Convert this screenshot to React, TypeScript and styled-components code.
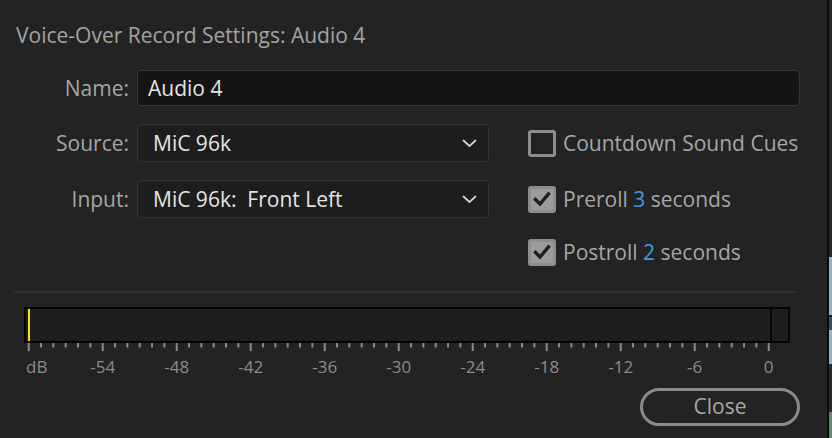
import React from "react";
import styled, { createGlobalStyle } from "styled-components";

const GlobalStyle = createGlobalStyle`
  html, body { margin: 0; padding: 0; background: #232323; }
  body { font-family: "Open Sans", "Noto Sans", sans-serif; }
  * { box-sizing: border-box; }
`;

const Screen = styled.div`
  width: 832px;
  height: 438px;
  display: flex;
  overflow: hidden;
  background: #232323;
`;

const Dialog = styled.div`
  width: 827px;
  height: 438px;
  display: flex;
  flex-direction: column;
  padding: 22px 27px 0 14px;
  background: #232323;
`;

const EdgeLine = styled.div`
  width: 2px;
  background: #0c0c0c;
`;

const Strip = styled.div`
  width: 3px;
  display: flex;
  flex-direction: column;
`;

const StripSeg = styled.div<{ $h: number; $c: string }>`
  height: ${(p) => p.$h}px;
  background: ${(p) => p.$c};
`;

const Title = styled.div`
  font-size: 21px;
  line-height: 26px;
  color: #a3a3a3;
  padding-left: 2px;
  white-space: nowrap;
`;

const Form = styled.div`
  margin-top: 22px;
  display: grid;
  grid-template-columns: 115px 352px 1fr;
  grid-template-rows: 36px 38px 38px 32px;
  column-gap: 8px;
  row-gap: 18px;
  align-items: center;
`;

const Label = styled.label`
  justify-self: end;
  font-size: 21px;
  color: #a6a6a6;
  line-height: 26px;
`;

const TextField = styled.div`
  grid-column: 2 / 4;
  height: 36px;
  background: #141414;
  border: 1px solid #353535;
  border-radius: 4px;
  display: flex;
  align-items: center;
  padding-left: 10px;
  font-size: 21px;
  color: #e4e4e4;
`;

const Select = styled.div`
  height: 38px;
  background: #1d1d1d;
  border: 1px solid #343434;
  border-radius: 4px;
  display: flex;
  align-items: center;
  justify-content: space-between;
  padding: 0 11px 0 15px;
  font-size: 21px;
  color: #e4e4e4;
  white-space: pre;
`;

const CheckRow = styled.div`
  grid-column: 3;
  margin-left: 31px;
  display: flex;
  align-items: center;
  gap: 7px;
  font-size: 21px;
  color: #a6a6a6;
  white-space: nowrap;
`;

const Box = styled.span<{ $checked?: boolean }>`
  width: 28px;
  height: 27px;
  border-radius: 3px;
  border: 3px solid #8d8d8d;
  background: ${(p) => (p.$checked ? "#9c9c9c" : "transparent")};
  display: flex;
  align-items: center;
  justify-content: center;
  flex-shrink: 0;
`;

const Num = styled.span`
  color: #3b9be6;
`;

const Separator = styled.div`
  margin-top: 23px;
  margin-right: 3px;
  height: 2px;
  background: #2e2e2e;
`;

const MeterArea = styled.div`
  margin-top: 14px;
  margin-left: 10px;
  width: 766px;
  display: flex;
  flex-direction: column;
`;

const Meter = styled.div`
  height: 36px;
  border: 2px solid #050505;
  background: #1e1e1e;
  display: flex;
  align-items: stretch;
`;

const Level = styled.div`
  margin-left: 2px;
  width: 2px;
  background: #f5e600;
`;

const MeterFill = styled.div`
  flex: 1;
`;

const Peak = styled.div`
  width: 18px;
  border-left: 2px solid #050505;
`;

const Scale = styled.svg`
  display: block;
  font-family: "Open Sans", "Noto Sans", sans-serif;
`;

const Footer = styled.div`
  display: flex;
  justify-content: flex-end;
  margin-top: 9px;
`;

const CloseButton = styled.button`
  width: 160px;
  height: 38px;
  border-radius: 19px;
  border: 3px solid #8a8a8a;
  background: transparent;
  color: #a8a8a8;
  font-family: "Open Sans", "Noto Sans", sans-serif;
  font-size: 21px;
  padding: 0 0 2px;
`;

const Chevron = () => (
  <svg width="15" height="9" viewBox="0 0 15 9">
    <path d="M1.5 1.5 L7.5 7 L13.5 1.5" fill="none" stroke="#cfcfcf" strokeWidth="1.8" strokeLinecap="round" strokeLinejoin="round" />
  </svg>
);

const Check = () => (
  <svg width="18" height="16" viewBox="0 0 18 16">
    <path d="M2.5 8.5 L7 13 L15.5 3" fill="none" stroke="#1e1e1e" strokeWidth="3.4" strokeLinecap="square" />
  </svg>
);

const labels = ["dB", "-54", "-48", "-42", "-36", "-30", "-24", "-18", "-12", "-6", "0"];

const MeterScale = () => {
  const x0 = 4.7;
  const step = 740 / 60;
  const ticks = Array.from({ length: 61 }, (_, i) => i);
  return (
    <Scale width="766" height="36" viewBox="0 0 766 36">
      {ticks.map((i) => {
        const major = i % 6 === 0;
        const x = x0 + i * step;
        return <rect key={i} x={x - 1} y={0} width={2} height={major ? 8 : 4.5} fill="#8a8a8a" />;
      })}
      {labels.map((l, k) => (
        <text
          key={l}
          x={k === 0 ? 2 : x0 + k * 6 * step}
          y={30}
          fontSize="17"
          fill="#8c8c8c"
          textAnchor={k === 0 ? "start" : "middle"}
        >
          {l}
        </text>
      ))}
    </Scale>
  );
};

export default function App() {
  return (
    <>
      <GlobalStyle />
      <Screen>
        <Dialog>
          <Title>Voice-Over Record Settings: Audio 4</Title>
          <Form>
            <Label>Name:</Label>
            <TextField>Audio 4</TextField>
            <Label>Source:</Label>
            <Select>
              <span>MiC 96k</span>
              <Chevron />
            </Select>
            <CheckRow>
              <Box />
              Countdown Sound Cues
            </CheckRow>
            <Label>Input:</Label>
            <Select>
              <span>MiC 96k:  Front Left</span>
              <Chevron />
            </Select>
            <CheckRow>
              <Box $checked>
                <Check />
              </Box>
              <span>
                Preroll <Num>3</Num> seconds
              </span>
            </CheckRow>
            <CheckRow>
              <Box $checked>
                <Check />
              </Box>
              <span>
                Postroll <Num>2</Num> seconds
              </span>
            </CheckRow>
          </Form>
          <Separator />
          <MeterArea>
            <Meter>
              <Level />
              <MeterFill />
              <Peak />
            </Meter>
            <MeterScale />
          </MeterArea>
          <Footer>
            <CloseButton>Close</CloseButton>
          </Footer>
        </Dialog>
        <EdgeLine />
        <Strip>
          <StripSeg $h={257} $c="#262626" />
          <StripSeg $h={58} $c="#8fb6cf" />
          <StripSeg $h={2} $c="#1a1a1a" />
          <StripSeg $h={13} $c="#3b4b62" />
          <StripSeg $h={34} $c="#8fb6cf" />
          <StripSeg $h={48} $c="#2a2a2a" />
          <StripSeg $h={26} $c="#5b8c6c" />
        </Strip>
      </Screen>
    </>
  );
}
